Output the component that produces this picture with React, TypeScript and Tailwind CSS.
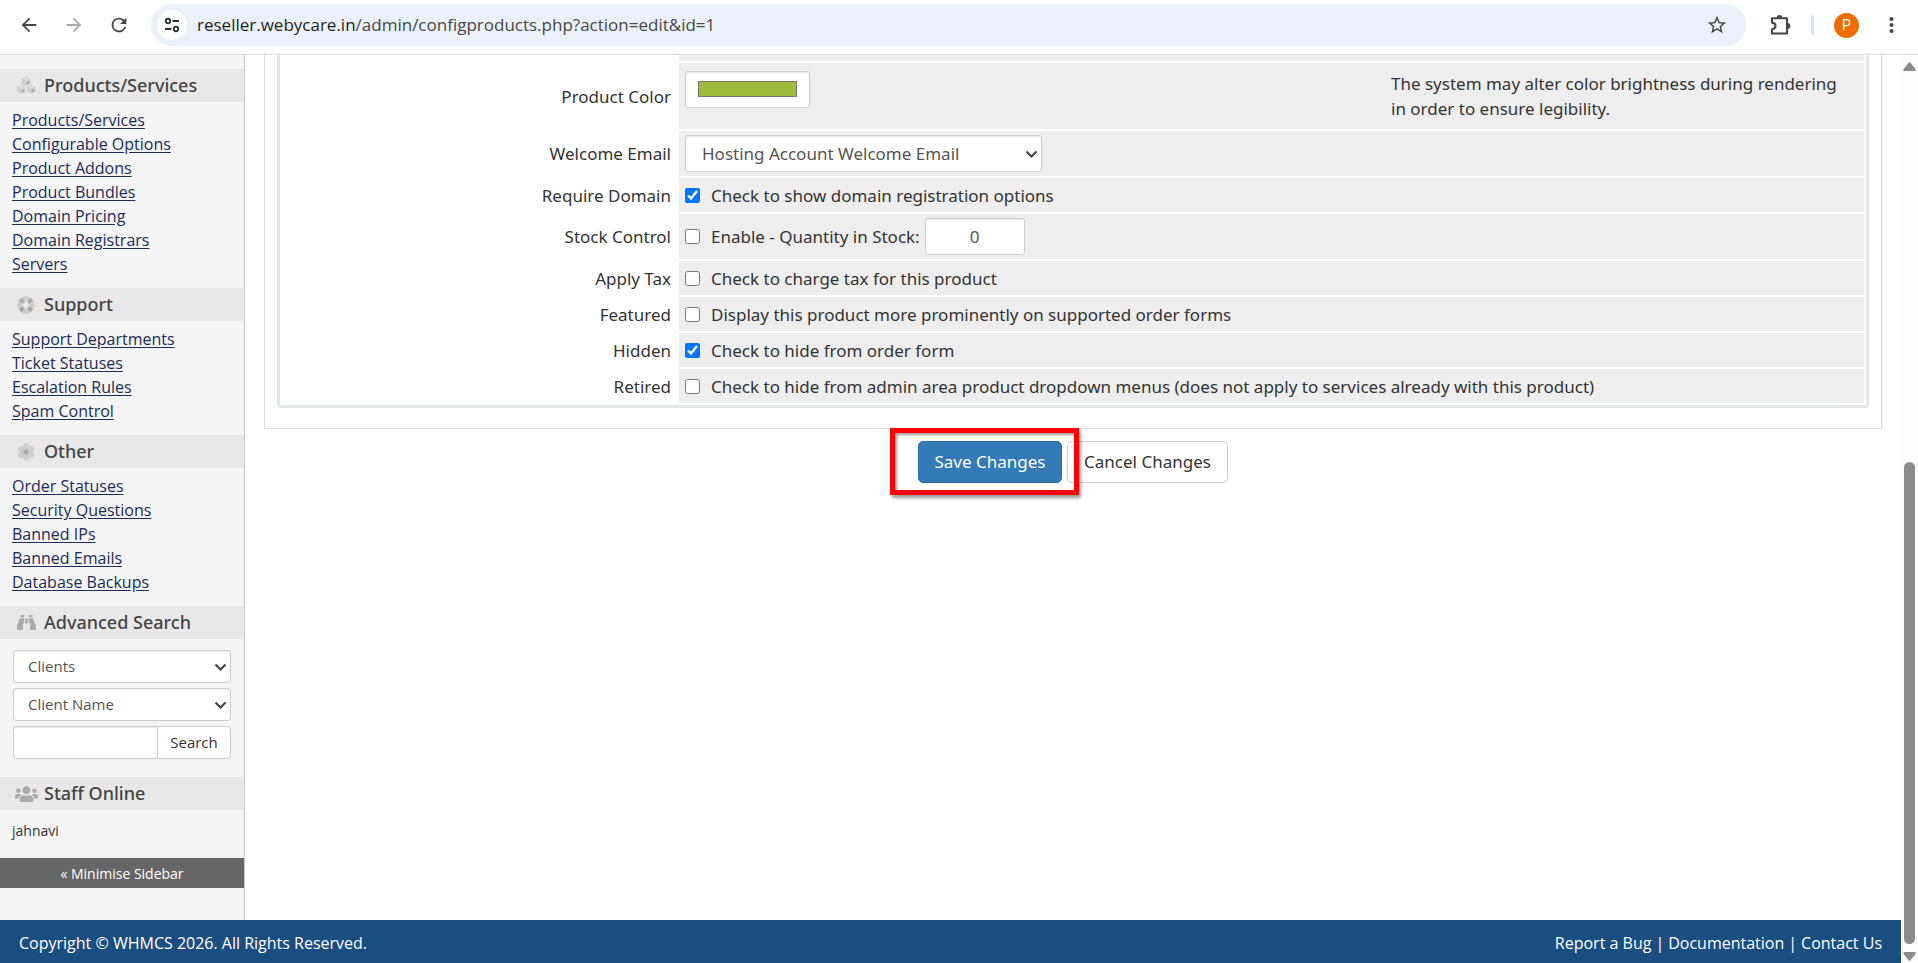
import { useState } from 'react'
import type { ReactNode } from 'react'

const productLinks = ['Products/Services', 'Configurable Options', 'Product Addons', 'Product Bundles', 'Domain Pricing', 'Domain Registrars', 'Servers']
const supportLinks = ['Support Departments', 'Ticket Statuses', 'Escalation Rules', 'Spam Control']
const otherLinks = ['Order Statuses', 'Security Questions', 'Banned IPs', 'Banned Emails', 'Database Backups']

/* ---------- icons ---------- */

function CubesIcon() {
  const cubes = [[10, 1], [5, 9], [15, 9]]
  return (
    <svg width="20" height="18" viewBox="0 0 20 18">
      {cubes.map(([x, y]) => (
        <g key={x} transform={`translate(${x} ${y})`}>
          <path d="M-4.2 1.2Q-4.2.6-3.6.4L-.5-.7Q0-.9.5-.7L3.6.4Q4.2.6 4.2 1.2V5.4Q4.2 6 3.6 6.3L.6 7.6Q0 7.9-.6 7.6L-3.6 6.3Q-4.2 6-4.2 5.4Z" fill="#cfcfcf" />
          <path d="M-3.4 1.3 0 .2 3.4 1.3 0 2.6Z" fill="#e4e4e4" />
          <path d="M.7 3.9 3.5 2.8V5.4L.7 6.7Z" fill="#b0b0b0" />
        </g>
      ))}
    </svg>
  )
}

function LifeRingIcon() {
  return (
    <svg width="18" height="18" viewBox="0 0 18 18" fill="none">
      <circle cx="9" cy="9" r="6.2" stroke="#cdcdcd" strokeWidth="5" />
      <g stroke="#a9a9a9" strokeWidth="3.4">
        <path d="M3.2 3.2 6.7 6.7M14.8 3.2 11.3 6.7M3.2 14.8 6.7 11.3M14.8 14.8 11.3 11.3" />
      </g>
    </svg>
  )
}

function CogIcon() {
  return (
    <svg width="18" height="18" viewBox="0 0 18 18">
      <g fill="#cdcdcd">
        <circle cx="9" cy="9" r="6.9" />
        <rect x="6.6" y="0.3" width="4.8" height="17.4" rx="1" />
        <rect x="6.6" y="0.3" width="4.8" height="17.4" rx="1" transform="rotate(60 9 9)" />
        <rect x="6.6" y="0.3" width="4.8" height="17.4" rx="1" transform="rotate(120 9 9)" />
      </g>
      <circle cx="9" cy="9" r="2.6" fill="#a9a9a9" />
    </svg>
  )
}

function BinocularsIcon() {
  return (
    <svg width="19" height="17" viewBox="0 0 512 512" preserveAspectRatio="none" fill="#aaa">
      <path d="M416 48c0-8.800-7.200-16-16-16h-64c-8.800 0-16 7.200-16 16v48h96V48zM63.900 159.900C61.400 253.800 3.500 274.200 0 404v44c0 17.700 14.300 32 32 32h96c17.700 0 32-14.300 32-32V288h32V128H95.800c-17.600 0-31.500 14.300-31.900 31.900zm384.200 0c-.4-17.600-14.200-31.900-31.900-31.900H320v160h32v160c0 17.700 14.300 32 32 32h96c17.700 0 32-14.300 32-32v-44c-3.500-129.800-61.400-150.200-63.900-244.100zM176 32h-64c-8.800 0-16 7.200-16 16v48h96V48c0-8.800-7.200-16-16-16zm48 256h64V128h-64v160z" />
    </svg>
  )
}

function UsersIcon() {
  return (
    <svg width="23" height="18" viewBox="0 0 640 512" preserveAspectRatio="none" fill="#aaa">
      <path d="M96 224c35.300 0 64-28.700 64-64s-28.700-64-64-64-64 28.700-64 64 28.700 64 64 64zm448 0c35.300 0 64-28.700 64-64s-28.700-64-64-64-64 28.700-64 64 28.700 64 64 64zm32 32h-64c-17.600 0-33.500 7.100-45.100 18.600 40.300 22.100 68.900 62 75.100 109.400h66c17.700 0 32-14.300 32-32v-32c0-35.300-28.700-64-64-64zm-256 0c61.900 0 112-50.100 112-112S381.900 32 320 32 208 82.100 208 144s50.100 112 112 112zm76.800 32h-8.300c-20.800 10-43.900 16-68.500 16s-47.600-6-68.500-16h-8.300C179.600 288 128 339.600 128 403.200V432c0 26.500 21.500 48 48 48h288c26.500 0 48-21.500 48-48v-28.800c0-63.600-51.600-115.200-115.200-115.200zm-223.700-13.400C161.500 263.100 145.600 256 128 256H64c-35.300 0-64 28.700-64 64v32c0 17.700 14.300 32 32 32h65.900c6.300-47.400 34.900-87.300 75.200-109.400z" />
    </svg>
  )
}

function Chevron() {
  return (
    <svg className="pointer-events-none absolute top-1/2 right-1 -mt-1" width="13" height="9" viewBox="0 0 13 9" fill="none" stroke="#444" strokeWidth="2.2">
      <path d="M1.500 1.500 6.500 6.500 11.500 1.500" />
    </svg>
  )
}

/* ---------- browser bar ---------- */

function BrowserBar() {
  return (
    <header className="flex h-[55px] shrink-0 items-center border-b border-[#dcdfe1] bg-white pb-1">
      <nav className="flex w-[151px] items-center gap-[23px] pl-[18px]" aria-label="Browser">
        <button aria-label="Back">
          <svg width="22" height="22" viewBox="0 0 24 24" fill="#444746"><path d="M20 11H7.830l5.590-5.590L12 4l-8 8 8 8 1.410-1.410L7.830 13H20v-2z" /></svg>
        </button>
        <button aria-label="Forward">
          <svg width="22" height="22" viewBox="0 0 24 24" fill="#a9abac"><path d="m12 4-1.410 1.410L16.170 11H4v2h12.170l-5.580 5.590L12 20l8-8z" /></svg>
        </button>
        <button aria-label="Reload">
          <svg width="22" height="22" viewBox="0 0 24 24" fill="#444746"><path d="M17.650 6.350A7.960 7.960 0 0 0 12 4a8 8 0 1 0 7.730 10h-2.080A6 6 0 1 1 12 6c1.660 0 3.140.69 4.220 1.780L13 11h7V4l-2.350 2.350z" /></svg>
        </button>
      </nav>
      <div className="flex h-[42px] flex-1 items-center rounded-full bg-[#ebf1fa] pr-[18px] pl-1.5">
        <button aria-label="Site information" className="flex size-[30px] items-center justify-center rounded-full bg-white">
          <svg width="18" height="18" viewBox="0 0 18 18" fill="none" stroke="#303334" strokeWidth="1.900">
            <circle cx="5" cy="5" r="2.200" />
            <path d="M9.500 5H16M2 13h6.500" />
            <circle cx="13" cy="13" r="2.200" />
          </svg>
        </button>
        <div className="flex-1 pl-2.5 text-[17px] whitespace-nowrap text-[#474747]">
          <span className="text-[#1f1f1f]">reseller.webycare.in</span>/admin/configproducts.php?action=edit&amp;id=1
        </div>
        <button aria-label="Bookmark">
          <svg width="22" height="22" viewBox="0 0 24 24" fill="#444746"><path d="m22 9.240-7.190-.62L12 2 9.190 8.630 2 9.240l5.460 4.730L5.820 21 12 17.270 18.180 21l-1.630-7.030L22 9.240zM12 15.400l-3.760 2.270 1-4.280-3.320-2.880 4.380-.38L12 6.100l1.710 4.040 4.380.38-3.320 2.880 1 4.280L12 15.400z" /></svg>
        </button>
      </div>
      <div className="flex w-[172px] items-center pl-[23px]">
        <button aria-label="Extensions">
          <svg width="23" height="22" viewBox="0 0 23 22" fill="none">
            <path d="M3 4.300h15v15.200H3v-4.300c2.300-.3 3.500-1.500 3.500-3.300S5.300 8.900 3 8.600z" stroke="#444746" strokeWidth="2.100" strokeLinejoin="round" />
            <path d="M7.700 3.800a2.800 2.800 0 0 1 5.600 0zM18.500 9.100a2.800 2.800 0 0 1 0 5.600z" fill="#444746" />
          </svg>
        </button>
        <span className="ml-[19px] h-5 w-[3px] rounded bg-[#d3e3fd]" />
        <button aria-label="Profile" className="ml-5 flex size-[25px] items-center justify-center rounded-full bg-[#ef6c00] font-[Roboto] text-[14px] text-white">P</button>
        <button aria-label="Menu" className="ml-[30px]">
          <svg width="5" height="16" viewBox="0 0 5 16" fill="#444746">
            <circle cx="2.500" cy="2" r="2" />
            <circle cx="2.500" cy="8" r="2" />
            <circle cx="2.500" cy="14" r="2" />
          </svg>
        </button>
      </div>
    </header>
  )
}

/* ---------- sidebar ---------- */

function SideHeading({ icon, children }: { icon: ReactNode; children: ReactNode }) {
  return (
    <h2 className="flex h-[33px] items-center bg-[#e8e8e8] pl-[13px] font-['Noto_Sans','Open_Sans',sans-serif] text-[18px] font-medium text-[#444]">
      <span className="mr-[5px] flex w-[26px] justify-center">{icon}</span>
      {children}
    </h2>
  )
}

function SideLinks({ links }: { links: string[] }) {
  return (
    <ul className="pt-1.5 pb-3 pl-3">
      {links.map((link) => (
        <li key={link} className="h-6 text-[16px] leading-6">
          <a href="#" className="text-[#1a2b5c] underline underline-offset-2">{link}</a>
        </li>
      ))}
    </ul>
  )
}

function SideSelect({ label, value }: { label: string; value: string }) {
  return (
    <div className="relative">
      <select aria-label={label} className="h-[33px] w-full appearance-none rounded-[3px] border border-[#ccc] bg-white px-3.5 text-[15px] text-[#555] shadow-[inset_0_1px_1px_rgba(0,0,0,0.075)]">
        <option>{value}</option>
      </select>
      <Chevron />
    </div>
  )
}

function Sidebar() {
  return (
    <aside className="w-[245px] shrink-0 border-r border-[#c8caca] bg-[#f5f5f5] pt-3.5">
      <SideHeading icon={<CubesIcon />}>Products/Services</SideHeading>
      <SideLinks links={productLinks} />
      <SideHeading icon={<LifeRingIcon />}>Support</SideHeading>
      <SideLinks links={supportLinks} />
      <SideHeading icon={<CogIcon />}>Other</SideHeading>
      <SideLinks links={otherLinks} />
      <SideHeading icon={<BinocularsIcon />}>Advanced Search</SideHeading>
      <form className="flex flex-col gap-[5px] px-[13px] pt-[11px] pb-[18px]">
        <SideSelect label="Search in" value="Clients" />
        <SideSelect label="Search by" value="Client Name" />
        <div className="flex">
          <input type="text" aria-label="Search term" className="h-[33px] w-[145px] rounded-l-[3px] border border-[#ccc] bg-white px-3 text-[15px] shadow-[inset_0_1px_1px_rgba(0,0,0,0.075)]" />
          <button type="button" className="-ml-px h-[33px] flex-1 rounded-r-[4px] border border-[#ccc] bg-white text-[15px] text-[#333]">Search</button>
        </div>
      </form>
      <SideHeading icon={<UsersIcon />}>Staff Online</SideHeading>
      <div className="px-3 pt-[9px] pb-[15px] text-[14px] leading-6 text-[#333]">jahnavi</div>
      <button className="block h-[30px] w-full bg-[#666] text-[14px] text-white">« Minimise Sidebar</button>
    </aside>
  )
}

/* ---------- product form ---------- */

function Row({ label, htmlFor, children }: { label: string; htmlFor: string; children: ReactNode }) {
  return (
    <tr>
      <th scope="row" className="w-1/4 pr-1.5 text-right align-middle font-normal">
        <label htmlFor={htmlFor}>{label}</label>
      </th>
      <td className="bg-[#eee] px-1.5 py-1">{children}</td>
    </tr>
  )
}

function CheckRow({ label, id, text, checked = false, children }: { label: string; id: string; text: string; checked?: boolean; children?: ReactNode }) {
  const [on, setOn] = useState(checked)
  return (
    <Row label={label} htmlFor={id}>
      <div className="flex min-h-[26px] items-center">
        <input id={id} type="checkbox" checked={on} onChange={() => setOn(!on)} className="mr-[11px] size-[15px] accent-[#0075ff]" />
        <label htmlFor={id}>{text}</label>
        {children}
      </div>
    </Row>
  )
}

function ProductForm() {
  return (
    <main className="min-w-0 flex-1 px-[19px] font-['Noto_Sans','Open_Sans',sans-serif]">
      <div className="border border-t-0 border-[#ddd] px-3 pb-5">
        <div className="rounded-b border-[3px] border-t-0 border-[#e2e7e9]">
          <table className="-mt-0.5 w-full border-separate border-spacing-[2px] text-[17px] leading-[25px]">
            <tbody>
              <tr>
                <td />
                <td className="h-1.5 bg-[#eee]" />
              </tr>
              <Row label="Product Color" htmlFor="color">
                <div className="flex items-start justify-between pt-1">
                  <div className="flex h-[37px] w-[125px] items-center rounded-[3px] border border-[#ccc] bg-white px-3 pb-0.5 shadow-[inset_0_1px_1px_rgba(0,0,0,0.075)]">
                    <input
                      id="color"
                      type="color"
                      defaultValue="#9cbc3c"
                      className="h-4 w-full appearance-none border border-[#777] [&::-webkit-color-swatch]:border-none [&::-webkit-color-swatch-wrapper]:p-0"
                    />
                  </div>
                  <p className="mb-1 w-[467px] pr-2.5">The system may alter color brightness during rendering in order to ensure legibility.</p>
                </div>
              </Row>
              <Row label="Welcome Email" htmlFor="welcome">
                <div className="relative w-[357px]">
                  <select id="welcome" className="block h-[37px] w-full appearance-none rounded-[3px] border border-[#ccc] bg-white px-4 text-[17px] text-[#555] shadow-[inset_0_1px_1px_rgba(0,0,0,0.075)]">
                    <option>Hosting Account Welcome Email</option>
                  </select>
                  <Chevron />
                </div>
              </Row>
              <CheckRow label="Require Domain" id="domain" text="Check to show domain registration options" checked />
              <CheckRow label="Stock Control" id="stock" text="Enable - Quantity in Stock:">
                <input aria-label="Quantity in stock" defaultValue="0" className="ml-[5px] h-[37px] w-[100px] rounded-[3px] border border-[#ccc] bg-white text-center text-[#555] shadow-[inset_0_1px_1px_rgba(0,0,0,0.075)]" />
              </CheckRow>
              <CheckRow label="Apply Tax" id="tax" text="Check to charge tax for this product" />
              <CheckRow label="Featured" id="featured" text="Display this product more prominently on supported order forms" />
              <CheckRow label="Hidden" id="hidden" text="Check to hide from order form" checked />
              <CheckRow label="Retired" id="retired" text="Check to hide from admin area product dropdown menus (does not apply to services already with this product)" />
            </tbody>
          </table>
        </div>
      </div>
      <div className="mt-3 flex justify-center gap-[5px] text-[17px]">
        <div className="relative">
          <button className="h-[42px] w-[144px] rounded-[5px] border border-[#2e6da4] bg-[#337ab7] text-white">Save Changes</button>
          {/* highlight frame */}
          <div className="pointer-events-none absolute -top-[13px] -left-7 z-10 h-[67px] w-[189px] border-[5px] border-[#fe0000] shadow-[2px_3px_3px_rgba(0,0,0,0.4),inset_2px_2px_3px_rgba(0,0,0,0.4)]" />
        </div>
        <button className="h-[42px] w-[161px] rounded-[5px] border border-[#ccc] bg-white text-[#333]">Cancel Changes</button>
      </div>
    </main>
  )
}

function ScrollTrack() {
  return (
    <div className="flex w-[17px] shrink-0 flex-col items-center bg-[#fcfcfc] pt-[7px]" aria-hidden="true">
      <svg width="13" height="9" viewBox="0 0 13 9" fill="#8b8b8b"><path d="M5.500.8Q6.500-.2 7.500.8L12.500 7.200Q13 9 11.500 9H1.500Q0 9 .5 7.200z" /></svg>
      <div className="flex w-full flex-1 flex-col items-center pt-[391px] pb-2">
        <div className="w-[11px] flex-1 rounded-full bg-[#8b8b8b]" />
      </div>
      <svg className="mb-0.5" width="13" height="9" viewBox="0 0 13 9" fill="#8b8b8b"><path d="M5.500 8.200Q6.500 9.200 7.500 8.200L12.500 1.800Q13 0 11.500 0H1.500Q0 0 .5 1.800z" /></svg>
    </div>
  )
}

export default function App() {
  return (
    <div className="flex min-h-screen flex-col bg-white font-['Open_Sans',sans-serif] text-[#333]">
      <BrowserBar />
      <div className="flex flex-1">
        <div className="flex min-w-0 flex-1 flex-col">
          <div className="flex flex-1">
            <Sidebar />
            <ProductForm />
          </div>
          <footer className="flex h-[43px] shrink-0 items-center justify-between bg-[#1a4d80] px-[19px] pt-0.5 text-[16px] text-white">
            <span>Copyright © WHMCS 2026. All Rights Reserved.</span>
            <nav className="flex gap-1">
              <a href="#">Report a Bug</a>|<a href="#">Documentation</a>|<a href="#">Contact Us</a>
            </nav>
          </footer>
        </div>
        <ScrollTrack />
      </div>
    </div>
  )
}
